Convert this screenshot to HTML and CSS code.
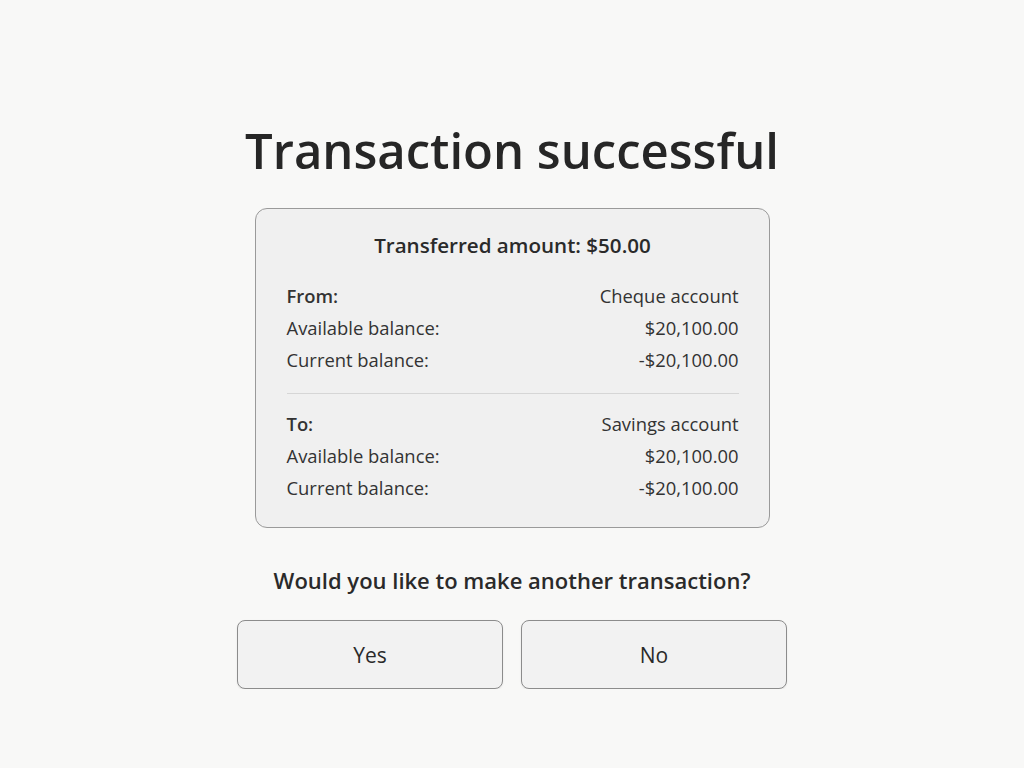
FILE: index.html
```html
<!doctype html>
<html>
<head>
	<title>Transaction successful</title>
	<link rel="stylesheet" href="styles.css">
</head>
<body>
	<main class="screen">
		<h1 class="title">Transaction successful</h1>

		<section class="summary">
			<h2 class="amount">Transferred amount: $50.00</h2>

			<div class="account">
				<div class="row head"><span>From:</span><span>Cheque account</span></div>
				<div class="row"><span>Available balance:</span><span>$20,100.00</span></div>
				<div class="row"><span>Current balance:</span><span>-$20,100.00</span></div>
			</div>

			<hr class="divider">

			<div class="account">
				<div class="row head"><span>To:</span><span>Savings account</span></div>
				<div class="row"><span>Available balance:</span><span>$20,100.00</span></div>
				<div class="row"><span>Current balance:</span><span>-$20,100.00</span></div>
			</div>
		</section>

		<p class="question">Would you like to make another transaction?</p>

		<div class="actions">
			<button class="btn">Yes</button>
			<button class="btn">No</button>
		</div>
	</main>
</body>
</html>
```

FILE: styles.css
```css
html, body {
	margin: 0;
	padding: 0;
}

body {
	background: #f8f8f7;
	color: #2a2a2a;
	font-family: "Open Sans", Lato, sans-serif;
}

.screen {
	display: flex;
	flex-direction: column;
	align-items: center;
	padding-top: 120px;
}

.title {
	margin: 0;
	font-size: 49px;
	font-weight: 600;
	line-height: 60px;
	color: #262626;
}

.summary {
	box-sizing: border-box;
	width: 515px;
	margin-top: 28px;
	padding: 20px 30px 23px 31px;
	background: #f0f0f0;
	border: 1px solid #9a9a9a;
	border-radius: 12px;
}

.amount {
	margin: 0 0 19px 0;
	text-align: center;
	font-size: 20.6px;
	font-weight: 600;
	line-height: 32px;
}

.row {
	display: flex;
	justify-content: space-between;
	font-size: 18.4px;
	line-height: 32px;
	color: #333;
}

.row.head span:first-child {
	font-weight: 600;
}

.divider {
	border: 0;
	border-top: 1px solid #d6d6d6;
	margin: 17px 0 14px 0;
}

.question {
	margin: 38px 0 0 0;
	font-size: 22px;
	font-weight: 600;
	line-height: 28px;
	color: #2a2a2a;
}

.actions {
	display: flex;
	gap: 18px;
	margin-top: 26px;
}

.btn {
	width: 266px;
	height: 69px;
	background: #f2f2f2;
	border: 1px solid #8c8c8c;
	border-radius: 8px;
	font-family: inherit;
	font-size: 21px;
	color: #2a2a2a;
	box-shadow: 0 1px 2px rgba(0, 0, 0, 0.08);
}
```
